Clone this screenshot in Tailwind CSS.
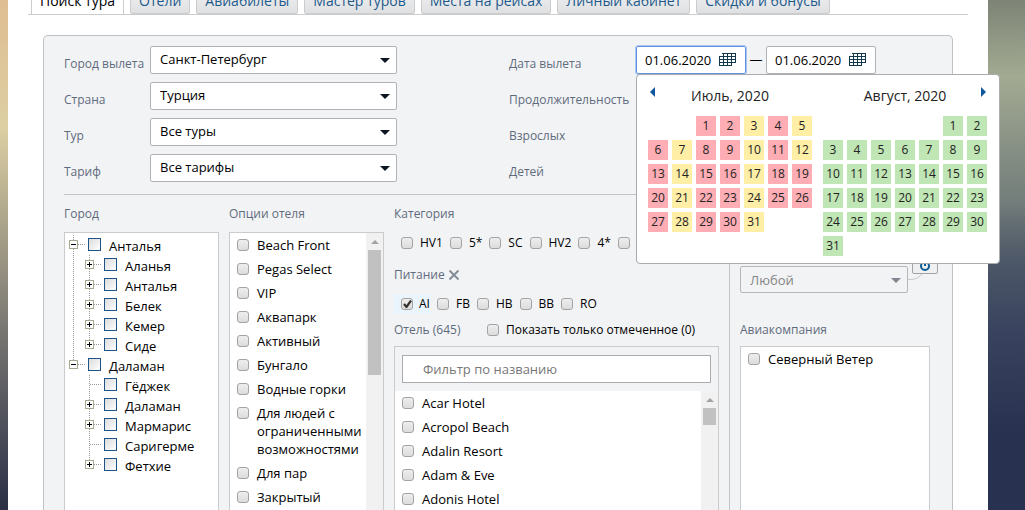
<!DOCTYPE html>
<html lang="ru">
<head>
<meta charset="utf-8">
<title>Поиск тура</title>
<script src="https://cdn.jsdelivr.net/npm/@tailwindcss/browser@4"></script>
</head>
<body class="flex h-screen overflow-hidden bg-[#2c3552] font-['Open_Sans','Noto_Sans',sans-serif] text-[13px] leading-[18px] text-black">
<div class="w-2 shrink-0 bg-linear-to-b from-[#dfbd92] via-[#dccfa2] via-25% to-[#2b2f45]"></div>

<div class="flex min-w-0 flex-1 flex-col bg-white">
  <nav class="mx-5 flex h-[15px] shrink-0 items-end gap-[6px] overflow-hidden border-b border-[#ccc] pl-[3px] text-sm whitespace-nowrap text-[#1d5a8c]" aria-label="Разделы">
    <a href="#" class="flex h-8 items-center border-x border-[#ccc] bg-white px-2 pt-[5px] text-black" aria-current="page">Поиск тура</a>
    <a href="#" class="flex h-8 items-center rounded-b-xs border border-[#ccc] bg-linear-to-b from-[#f6f6f6] to-[#dfe0e2] px-2 pt-[5px]">Отели</a>
    <a href="#" class="flex h-8 items-center rounded-b-xs border border-[#ccc] bg-linear-to-b from-[#f6f6f6] to-[#dfe0e2] px-2 pt-[5px]">Авиабилеты</a>
    <a href="#" class="flex h-8 items-center rounded-b-xs border border-[#ccc] bg-linear-to-b from-[#f6f6f6] to-[#dfe0e2] px-2 pt-[5px]">Мастер туров</a>
    <a href="#" class="flex h-8 items-center rounded-b-xs border border-[#ccc] bg-linear-to-b from-[#f6f6f6] to-[#dfe0e2] px-2 pt-[5px]">Места на рейсах</a>
    <a href="#" class="flex h-8 items-center rounded-b-xs border border-[#ccc] bg-linear-to-b from-[#f6f6f6] to-[#dfe0e2] px-2 pt-[5px]">Личный кабинет</a>
    <a href="#" class="flex h-8 items-center rounded-b-xs border border-[#ccc] bg-linear-to-b from-[#f6f6f6] to-[#dfe0e2] px-2 pt-[5px]">Скидки и бонусы</a>
  </nav>

  <form class="mt-5 mr-[35px] ml-[35px] flex min-h-0 flex-1 flex-col rounded-t-[5px] border border-b-0 border-[#bfc1c4] bg-[#f2f3f5] px-5 pt-[10px]">
    <div class="flex shrink-0 border-b border-[#c1c4c8] pb-3 text-xs text-[#5f6b7d]">
      <div class="flex w-[445px] flex-col gap-2">
        <div class="flex items-center">
          <label for="from" class="w-[86px] pt-2 whitespace-nowrap">Город вылета</label>
          <div class="relative w-[247px]">
            <select id="from" class="h-7 w-full appearance-none rounded-xs border border-[#b0b2b5] bg-white px-[9px] text-[13px] text-black"><option>Санкт-Петербург</option></select>
            <svg class="pointer-events-none absolute top-3 right-[7px]" width="10" height="5"><path d="M0 0h10L5 5z" fill="#0d1522"/></svg>
          </div>
        </div>
        <div class="flex items-center">
          <label for="country" class="w-[86px] pt-2">Страна</label>
          <div class="relative w-[247px]">
            <select id="country" class="h-7 w-full appearance-none rounded-xs border border-[#b0b2b5] bg-white px-[9px] text-[13px] text-black"><option>Турция</option></select>
            <svg class="pointer-events-none absolute top-3 right-[7px]" width="10" height="5"><path d="M0 0h10L5 5z" fill="#0d1522"/></svg>
          </div>
        </div>
        <div class="flex items-center">
          <label for="tour" class="w-[86px] pt-2">Тур</label>
          <div class="relative w-[247px]">
            <select id="tour" class="h-7 w-full appearance-none rounded-xs border border-[#b0b2b5] bg-white px-[9px] text-[13px] text-black"><option>Все туры</option></select>
            <svg class="pointer-events-none absolute top-3 right-[7px]" width="10" height="5"><path d="M0 0h10L5 5z" fill="#0d1522"/></svg>
          </div>
        </div>
        <div class="flex items-center">
          <label for="tariff" class="w-[86px] pt-2">Тариф</label>
          <div class="relative w-[247px]">
            <select id="tariff" class="h-7 w-full appearance-none rounded-xs border border-[#b0b2b5] bg-white px-[9px] text-[13px] text-black"><option>Все тарифы</option></select>
            <svg class="pointer-events-none absolute top-3 right-[7px]" width="10" height="5"><path d="M0 0h10L5 5z" fill="#0d1522"/></svg>
          </div>
        </div>
      </div>

      <div class="flex flex-col gap-2">
        <div class="relative flex h-7 items-center">
          <label for="date1" class="w-[127px] pt-2">Дата вылета</label>
          <div class="relative w-[110px]">
            <input id="date1" value="01.06.2020" class="h-7 w-full rounded-xs border border-[#5e92e0] bg-white px-2 text-[13px] text-black outline outline-[#a9c6f5]">
            <svg class="pointer-events-none absolute top-[7px] right-[10px]" width="17" height="13" viewBox="0 0 17 13" fill="none" stroke="#12384d" shape-rendering="crispEdges"><path d="M3 .5h14M4.500 0v13M8.500 0v13M12.500 0v13M16.500 0v10M0 3.500h17M0 6.500h17M0 9.500h17M.5 3v10M0 12.500h13"/></svg>
          </div>
          <span class="w-5 text-center text-[13px] text-black">—</span>
          <div class="relative w-[110px]">
            <input id="date2" aria-label="Дата вылета по" value="01.06.2020" class="h-7 w-full rounded-xs border border-[#b0b2b5] bg-white px-2 text-[13px] text-black">
            <svg class="pointer-events-none absolute top-[7px] right-[10px]" width="17" height="13" viewBox="0 0 17 13" fill="none" stroke="#12384d" shape-rendering="crispEdges"><path d="M3 .5h14M4.500 0v13M8.500 0v13M12.500 0v13M16.500 0v10M0 3.500h17M0 6.500h17M0 9.500h17M.5 3v10M0 12.500h13"/></svg>
          </div>

          <!-- Date picker popup -->
          <div class="absolute top-7 left-[127px] z-10 flex h-[190px] w-[364px] rounded-[4px] border border-[#a9abae] bg-white px-[11px] pt-[11px] text-[#222]">
            <button type="button" aria-label="Предыдущий месяц" class="absolute top-3 left-[13px]"><svg width="5" height="10"><path d="M5 0v10L0 5z" fill="#0f569c"/></svg></button>
            <button type="button" aria-label="Следующий месяц" class="absolute top-3 right-[13px]"><svg width="5" height="10"><path d="M0 0v10l5-5z" fill="#0f569c"/></svg></button>
            <div class="mr-[11px] w-[164px]">
              <div class="mb-[10px] h-5 text-center text-sm">Июль, 2020</div>
              <div id="july" class="grid grid-cols-7 gap-1"></div>
            </div>
            <div class="w-[164px]">
              <div class="mb-[10px] h-5 text-center text-sm">Август, 2020</div>
              <div id="august" class="grid grid-cols-7 gap-1"></div>
            </div>
          </div>
        </div>
        <div class="flex h-7 items-center pt-2">Продолжительность</div>
        <div class="flex h-7 items-center pt-2">Взрослых</div>
        <div class="flex h-7 items-center pt-2">Детей</div>
      </div>
    </div>

    <div class="flex min-h-0 flex-1 gap-[10px]">
      <!-- Cities -->
      <section class="flex w-[155px] shrink-0 flex-col pt-[10px]">
        <h2 class="mb-[9px] text-xs leading-[18px] text-[#5f6b7d]">Город</h2>
        <div id="tree" class="flex-1 border border-b-0 border-[#c9cbcd] bg-white pt-[2px]"></div>
      </section>

      <!-- Hotel options -->
      <section class="flex w-[155px] shrink-0 flex-col pt-[10px]">
        <h2 class="mb-[9px] text-xs leading-[18px] text-[#5f6b7d]">Опции отеля</h2>
        <div class="flex min-h-0 flex-1 border border-b-0 border-[#c9cbcd] bg-white">
          <div id="options" class="min-w-0 flex-1 overflow-hidden pl-[7px]"></div>
          <div class="flex w-[17px] flex-col items-center bg-[#f1f1f1] pt-[7px]">
            <svg class="shrink-0" width="8" height="4"><path d="M0 4h8L4 0z" fill="#a3a3a3"/></svg>
            <div class="mt-[6px] h-[125px] w-[13px] bg-[#c1c1c1]"></div>
          </div>
        </div>
      </section>

      <!-- Category, meals and hotels -->
      <section class="flex min-w-0 flex-1 flex-col pt-[10px]">
        <h2 class="text-xs leading-[18px] text-[#5f6b7d]">Категория</h2>
        <div id="category" class="mt-[10px] flex h-5 items-center overflow-hidden"></div>
        <div class="mt-[13px] flex items-center gap-1 text-xs leading-[18px] text-[#5f6b7d]">
          <h2>Питание</h2>
          <button type="button" aria-label="Сбросить питание"><svg width="10" height="10" viewBox="0 0 10 10" stroke="#858d98" stroke-width="2"><path d="M.5 .5l9 9M9.500 .5l-9 9"/></svg></button>
        </div>
        <div id="meals" class="mt-[10px] flex h-5 items-center"></div>
        <div class="mt-[7px] flex h-[18px] items-center">
          <h2 class="w-[93px] text-xs leading-[18px] text-[#5f6b7d]">Отель (645)</h2>
          <label class="flex items-center gap-[7px] text-xs"><input type="checkbox" class="size-3 shrink-0 appearance-none rounded-[3px] border border-[#a3a3a3] bg-linear-to-b from-[#eee] to-[#dcdcdc]">Показать только отмеченное (0)</label>
        </div>
        <div class="mt-[7px] flex min-h-0 flex-1 flex-col border border-b-0 border-[#c9cbcd]">
          <div class="px-[7px] py-2">
            <input type="text" aria-label="Фильтр по названию" placeholder="Фильтр по названию" class="h-7 w-full border border-[#a9abae] bg-white px-5 text-[13px] placeholder:text-[#777]">
          </div>
          <div class="flex min-h-0 flex-1 bg-white">
            <div id="hotels" class="min-w-0 flex-1 overflow-hidden pl-[7px]"></div>
            <div class="flex w-[17px] flex-col items-center bg-[#f1f1f1] pt-[7px]">
              <svg class="shrink-0" width="8" height="4"><path d="M0 4h8L4 0z" fill="#a3a3a3"/></svg>
              <div class="mt-[6px] h-[17px] w-[13px] bg-[#c1c1c1]"></div>
            </div>
          </div>
        </div>
      </section>

      <!-- Flight -->
      <section class="flex w-[203px] shrink-0 flex-col border-l border-[#c1c4c8] pr-[2px] pl-[10px]">
        <div class="flex pt-[71px]">
          <div class="relative w-[168px]">
            <select aria-label="Перелёт" disabled class="h-[27px] w-full appearance-none rounded-xs border border-[#b5b7bb] bg-[#f2f3f5] px-[9px] text-[13px] text-[#858585] opacity-100"><option>Любой</option></select>
            <svg class="pointer-events-none absolute top-3 right-[7px]" width="10" height="5"><path d="M0 0h10L5 5z" fill="#7f8690"/></svg>
            <svg class="absolute top-2 left-[168px]" width="15" height="6" fill="none" stroke="#c4c6c9"><path d="M0 5.500C8 5.500 10 4 14 0"/></svg>
            <button type="button" aria-label="Связать перелёты" class="absolute -top-[14px] left-[172px] flex h-[22px] w-[26px] justify-center rounded-xs border border-[#a0a4aa] bg-[#eef0f2] pt-[8px]"><svg width="10" height="10" viewBox="0 0 10 10" fill="none" stroke="#0d5a94" stroke-width="2"><circle cx="5" cy="5" r="4"/><path d="M5 2v3"/></svg></button>
          </div>
        </div>
        <h2 class="mt-7 mb-[7px] text-xs leading-[18px] text-[#5f6b7d]">Авиакомпания</h2>
        <div id="airlines" class="flex-1 border border-b-0 border-[#c9cbcd] bg-white pl-[7px]"></div>
      </section>
    </div>
  </form>
</div>
<div class="w-[37px] shrink-0 bg-linear-to-b from-[#7d8476] via-[#a3aa92] via-15% to-[#5c676e] to-52%"><div class="h-full bg-linear-to-b from-transparent from-40% via-[#39435f] via-65% to-[#283250] to-85%"></div></div>

<script>
const el = id => document.getElementById(id);
const box = '<input type="checkbox" class="mt-[3px] size-3 shrink-0 appearance-none rounded-[3px] border border-[#a3a3a3] bg-linear-to-b from-[#eee] to-[#dcdcdc]">';
const row = t => `<label class="flex items-start gap-2 py-[3px]">${box}<span>${t}</span></label>`;
el('options').innerHTML = ['Beach Front','Pegas Select','VIP','Аквапарк','Активный','Бунгало','Водные горки','Для людей с ограниченными возможностями','Для пар','Закрытый'].map(row).join('');
el('hotels').innerHTML = ['Acar Hotel','Acropol Beach','Adalin Resort','Adam &amp; Eve','Adonis Hotel'].map(row).join('');
el('airlines').innerHTML = row('Северный Ветер');

const chip = t => `<label class="flex h-5 shrink-0 items-center gap-[7px] pl-[7px] text-xs"><input type="checkbox" class="size-3 shrink-0 appearance-none rounded-[3px] border border-[#a3a3a3] bg-linear-to-b from-[#eee] to-[#dcdcdc]">${t}</label>`;
el('category').innerHTML = ['HV1','5*','SC','HV2','4*','3*'].map(chip).join('');
el('meals').innerHTML = `<label class="relative flex h-5 items-center gap-[6px] bg-[#e9f4fc] pl-[7px] text-xs"><input type="checkbox" checked class="size-3 shrink-0 appearance-none rounded-[3px] border border-[#a3a3a3] bg-linear-to-b from-[#eee] to-[#dcdcdc]"><svg class="pointer-events-none absolute top-[6px] left-[9px]" width="9" height="8" fill="none" stroke="#333" stroke-width="2.200"><path d="M1 4l2.500 3L8 .5"/></svg>AI</label>` + ['FB','HB','BB','RO'].map(chip).join('');

// Tree: sign is '+', '-' or '' for a leaf; y1..y2 is the vertical connector span
const node = (t, sign, child, y1, y2, outer) => `<div class="flex h-5">
${child ? `<svg width="16" height="20" class="shrink-0" stroke="#999" stroke-dasharray="1 1">${outer ? '<path d="M8.500 0v20"/>' : ''}</svg>` : ''}
<svg width="23" height="20" class="shrink-0" fill="none" shape-rendering="crispEdges"><path d="M8.500 ${y1}V${y2}M9 9.500h11" stroke="#999" stroke-dasharray="1 1"/>${sign ? `<path d="M4.500 5.500h8v8h-8z" fill="#fff" stroke="#a8a890"/><path d="M6 9.500h5${sign === '+' ? 'M8.500 7v5' : ''}" stroke="#000"/>` : ''}</svg>
<label class="flex items-start gap-2 whitespace-nowrap"><input type="checkbox" class="mt-[3px] size-[13px] shrink-0 appearance-none border border-[#1d5387] bg-linear-to-br from-[#dcdcdc] to-white"><span class="pt-[2px]">${t}</span></label></div>`;
el('tree').innerHTML = node('Анталья','-',false,0,20) +
  ['Аланья','Анталья','Белек','Кемер'].map(t => node(t,'+',true,0,20,true)).join('') + node('Сиде','+',true,0,10,true) +
  node('Даламан','-',false,0,10) + node('Гёджек','',true,0,20) + node('Даламан','+',true,0,20) + node('Мармарис','+',true,0,20) + node('Саригерме','',true,0,20) + node('Фетхие','+',true,0,10);

const day = (d, c) => `<button type="button" class="size-5 text-center text-xs leading-5 ${c}">${d}</button>`;
const yellow = [3,5,7,10,12,14,17,21,24,28,31];
let july = '<span></span><span></span>', august = '<span></span><span></span><span></span><span></span><span></span>';
for (let d = 1; d <= 31; d++) {
  july += day(d, yellow.includes(d) ? 'bg-[#ffeea6]' : 'bg-[#ffadb5]');
  august += day(d, 'bg-[#c0e6b5]');
}
el('july').innerHTML = july;
el('august').innerHTML = august;
</script>
</body>
</html>
